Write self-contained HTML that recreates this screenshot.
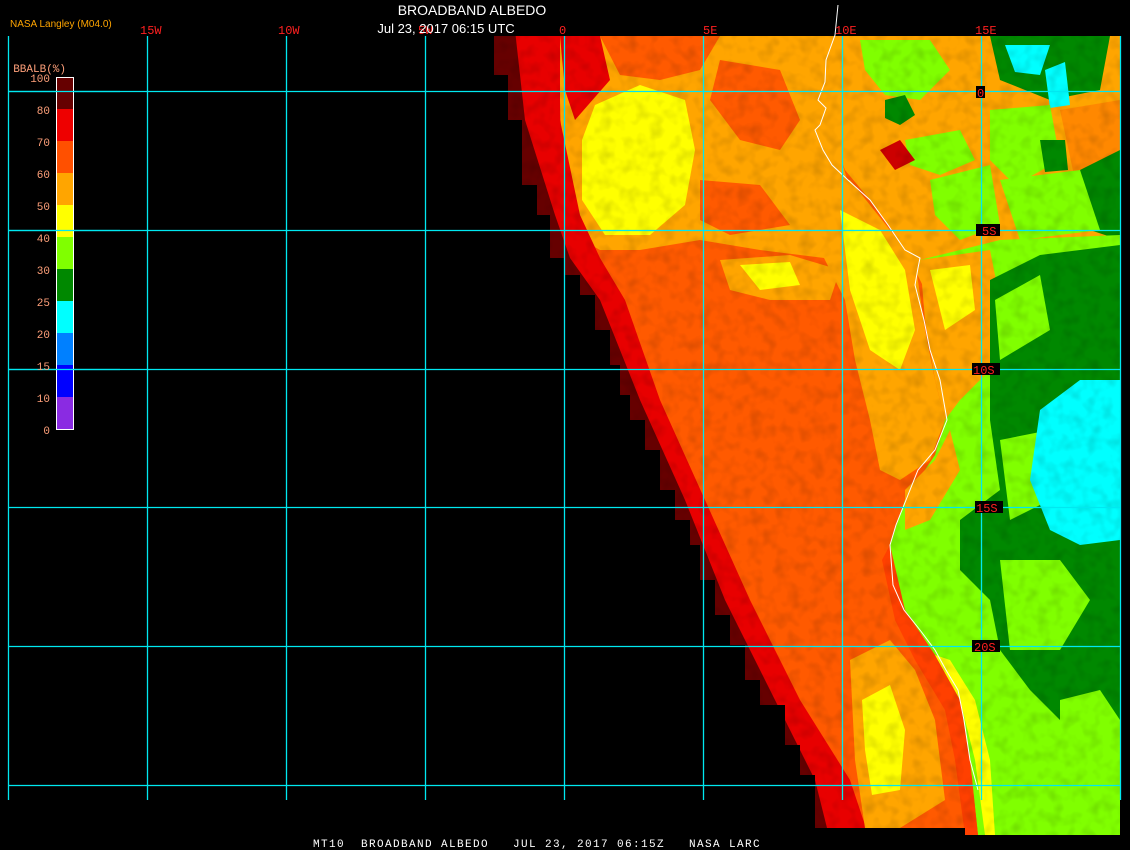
<!DOCTYPE html>
<html><head><meta charset="utf-8"><style>
html,body{margin:0;padding:0;background:#000;}
body{width:1130px;height:850px;overflow:hidden;position:relative;font-family:"Liberation Sans",sans-serif;}
svg{position:absolute;left:0;top:0;}
</style></head><body>
<svg width="1130" height="850" viewBox="0 0 1130 850">
<defs>
<clipPath id="d"><polygon points="494,36 1120,36 1120,835 965,835 965,828 815,828 815,775 800,775 800,745 785,745 785,705 760,705 760,680 745,680 745,645 730,645 730,615 715,615 715,580 700,580 700,545 690,545 690,520 675,520 675,490 660,490 660,450 645,450 645,420 630,420 630,395 620,395 620,365 610,365 610,330 595,330 595,295 580,295 580,275 565,275 565,258 550,258 550,215 537,215 537,185 522,185 522,120 508,120 508,75 494,75"/></clipPath>
<filter id="n" x="0" y="0" width="100%" height="100%"><feTurbulence type="fractalNoise" baseFrequency="0.08" numOctaves="2" seed="3"/><feColorMatrix values="0 0 0 0 0  0 0 0 0 0  0 0 0 0 0  0 0 0 -2.2 1.25"/></filter>
</defs>
<g clip-path="url(#d)">
<rect x="480" y="30" width="650" height="810" fill="#ff5a00"/>
<polygon points="560,36 835,36 830,120 850,190 880,230 840,260 760,250 700,240 640,250 600,250 565,230 560,100" fill="#ffa500"/>
<polygon points="595,105 640,85 685,100 695,150 685,205 650,235 605,235 582,200 582,140" fill="#ffff00"/>
<polygon points="600,36 720,36 700,70 660,80 620,75" fill="#ff5a00"/>
<polygon points="720,60 780,70 800,120 780,150 740,140 710,100" fill="#ff5a00"/>
<polygon points="700,180 760,185 790,225 730,235 700,220" fill="#ff5a00"/>
<polygon points="720,260 790,255 840,270 830,300 770,300 730,290" fill="#ffa500"/>
<polygon points="740,265 790,262 800,285 760,290" fill="#ffff00"/>
<polygon points="800,180 850,180 890,230 915,260 925,330 935,380 945,420 930,460 900,480 880,470 870,420 855,360 845,300 820,250" fill="#ffa500"/>
<polygon points="840,210 880,230 905,270 915,330 900,370 870,350 850,290" fill="#ffff00"/>
<polygon points="480,30 560,30 560,120 580,215 600,258 625,300 660,400 705,500 750,600 800,700 850,780 870,840 480,840" fill="#e80000"/>
<polygon points="480,30 515,30 525,120 555,215 570,258 600,300 640,400 685,500 725,600 775,700 815,780 830,840 480,840" fill="#660000"/>
<polygon points="560,36 600,36 610,80 575,120 565,90" fill="#e80000"/>
<!-- bottom orange/yellow -->
<polygon points="850,660 890,640 915,670 935,720 945,800 900,828 865,828 855,760" fill="#ffa500"/>
<polygon points="862,700 890,685 905,730 900,790 872,795 865,750" fill="#ffff00"/>
<!-- northern land mixed -->
<polygon points="835,36 1120,36 1120,250 1000,250 960,300 930,300 905,250 870,200 845,170 830,130 825,80" fill="#ffa500"/>
<polygon points="860,40 930,40 950,70 920,100 885,95 865,70" fill="#80ff00"/>
<polygon points="885,100 905,95 915,115 900,125 885,118" fill="#008800"/>
<polygon points="905,140 960,130 975,160 940,175 910,165" fill="#80ff00"/>
<polygon points="930,180 990,165 1000,225 960,240 935,215" fill="#80ff00"/>
<polygon points="880,150 900,140 915,160 895,170" fill="#cc0000"/>
<polygon points="990,36 1110,36 1100,90 1050,100 1000,80" fill="#008800"/>
<polygon points="1005,45 1050,45 1040,75 1015,72" fill="#00ffff"/>
<polygon points="1045,70 1065,62 1070,105 1050,108" fill="#00ffff"/>
<polygon points="1060,110 1120,100 1120,190 1075,180" fill="#ff8800"/>
<polygon points="990,110 1050,105 1060,160 1015,185 990,160" fill="#80ff00"/>
<polygon points="1040,140 1065,140 1068,170 1045,172" fill="#008800"/>
<polygon points="1080,170 1120,150 1120,240 1090,230" fill="#008800"/>
<polygon points="1000,180 1080,170 1100,230 1020,240" fill="#80ff00"/>
<polygon points="920,260 1000,240 1120,235 1120,835 978,835 970,760 960,700 935,655 905,615 893,580 890,545 905,500 935,455 945,420 930,340" fill="#80ff00"/>
<polygon points="920,260 990,250 1000,300 990,370 960,400 945,420 935,380 925,320" fill="#ffa500"/>
<polygon points="930,270 970,265 975,310 945,330" fill="#ffff00"/>
<polygon points="890,545 905,610 935,655 960,700 970,760 978,835 965,835 955,760 945,710 915,660 895,620 882,560" fill="#ff4000"/>
<polygon points="935,655 960,700 975,760 985,835 995,835 990,760 975,700 950,660" fill="#ffff00"/>
<polygon points="905,490 935,460 950,430 960,470 930,520 905,530" fill="#ffa500"/>
<polygon points="990,280 1040,255 1120,245 1120,835 1100,835 1100,800 1060,720 1030,690 1000,650 990,600 960,570 960,520 1000,490 990,420 990,360" fill="#008800"/>
<polygon points="995,300 1040,275 1050,330 1000,360" fill="#80ff00"/>
<polygon points="1000,440 1040,432 1050,500 1010,520" fill="#80ff00"/>
<polygon points="1000,560 1060,560 1090,600 1060,650 1010,650" fill="#80ff00"/>
<polygon points="1060,700 1100,690 1120,720 1120,835 1070,835 1060,760" fill="#80ff00"/>
<polygon points="1040,410 1080,380 1120,380 1120,540 1080,545 1050,530 1030,480" fill="#00ffff"/>
<rect x="480" y="30" width="650" height="810" fill="#000" filter="url(#n)" opacity="0.12"/>
</g>
<polyline points="838,5 835,35 826,60 825,82 818,100 826,108 820,125 815,130 823,150 832,165 848,180 870,200 888,225 905,250 920,258 918,268 915,285 924,320 930,350 940,380 947,420 935,450 918,470 908,495 896,525 890,545 893,585 904,610 920,630 935,650 946,670 958,690 964,720 970,760 978,790" fill="none" stroke="#fff" stroke-width="1"/>
<g stroke="#00e8f0" stroke-width="1.3">
<line x1="8.5" y1="36" x2="8.5" y2="800"/><line x1="147.5" y1="36" x2="147.5" y2="800"/><line x1="286.5" y1="36" x2="286.5" y2="800"/><line x1="425.5" y1="36" x2="425.5" y2="800"/><line x1="564.5" y1="36" x2="564.5" y2="800"/><line x1="703.5" y1="36" x2="703.5" y2="800"/><line x1="842.5" y1="36" x2="842.5" y2="800"/><line x1="981.5" y1="36" x2="981.5" y2="800"/><line x1="1120.5" y1="36" x2="1120.5" y2="800"/>
<line x1="8" y1="91.5" x2="1120" y2="91.5"/><line x1="8" y1="230.5" x2="1120" y2="230.5"/><line x1="8" y1="369.5" x2="1120" y2="369.5"/><line x1="8" y1="507.5" x2="1120" y2="507.5"/><line x1="8" y1="646.5" x2="1120" y2="646.5"/><line x1="8" y1="785.5" x2="1120" y2="785.5"/>
</g>
<g font-family="Liberation Mono, monospace" font-size="12" fill="#ff2020">
<rect x="976" y="86" width="9" height="12" fill="#000"/><text x="977" y="97">0</text>
<rect x="976" y="224" width="24" height="12" fill="#000"/><text x="982" y="235">5S</text>
<rect x="972" y="363" width="28" height="12" fill="#000"/><text x="973" y="374">10S</text>
<rect x="975" y="501" width="28" height="12" fill="#000"/><text x="976" y="512">15S</text>
<rect x="972" y="640" width="28" height="12" fill="#000"/><text x="974" y="651">20S</text>
<text x="140" y="34">15W</text><text x="278" y="34">10W</text><text x="418" y="34">5W</text><text x="559" y="34">0</text><text x="703" y="34">5E</text><text x="835" y="34">10E</text><text x="975" y="34">15E</text>
</g>
<g>
<rect x="56" y="77" width="18" height="32" fill="#660000"/>
<rect x="56" y="109" width="18" height="32" fill="#ee0000"/>
<rect x="56" y="141" width="18" height="32" fill="#ff5000"/>
<rect x="56" y="173" width="18" height="32" fill="#ffa500"/>
<rect x="56" y="205" width="18" height="32" fill="#ffff00"/>
<rect x="56" y="237" width="18" height="32" fill="#80ff00"/>
<rect x="56" y="269" width="18" height="32" fill="#008800"/>
<rect x="56" y="301" width="18" height="32" fill="#00ffff"/>
<rect x="56" y="333" width="18" height="32" fill="#0080ff"/>
<rect x="56" y="365" width="18" height="32" fill="#0000ff"/>
<rect x="56" y="397" width="18" height="32" fill="#8a2be2"/>
<rect x="56.5" y="77.5" width="17" height="352" fill="none" stroke="#fff" stroke-width="1"/>
<line x1="8" y1="91.5" x2="120" y2="91.5" stroke="#00e8f0" stroke-width="1.3"/>
<line x1="8" y1="230.5" x2="120" y2="230.5" stroke="#00e8f0" stroke-width="1.3"/>
<line x1="8" y1="369.5" x2="120" y2="369.5" stroke="#00e8f0" stroke-width="1.3"/>
</g>
<g font-family="Liberation Mono, monospace" font-size="11" fill="#ffa07a" text-anchor="end">
<text x="50" y="82">100</text><text x="50" y="114">80</text><text x="50" y="146">70</text><text x="50" y="178">60</text><text x="50" y="210">50</text><text x="50" y="242">40</text><text x="50" y="274">30</text><text x="50" y="306">25</text><text x="50" y="338">20</text><text x="50" y="370">15</text><text x="50" y="402">10</text><text x="50" y="434">0</text>
<text x="66" y="72" text-anchor="end">BBALB(%)</text>
</g>
<text x="10" y="27" font-size="10" fill="#ffa500">NASA Langley (M04.0)</text>
<text x="472" y="15" font-size="14" fill="#fff" text-anchor="middle">BROADBAND ALBEDO</text>
<text x="446" y="33" font-size="13" fill="#fff" text-anchor="middle">Jul 23, 2017 06:15 UTC</text>
<text x="313" y="847" font-family="Liberation Mono, monospace" font-size="11" fill="#fff" letter-spacing="1.4" xml:space="preserve">MT10  BROADBAND ALBEDO   JUL 23, 2017 06:15Z   NASA LARC</text>
</svg>
</body></html>
